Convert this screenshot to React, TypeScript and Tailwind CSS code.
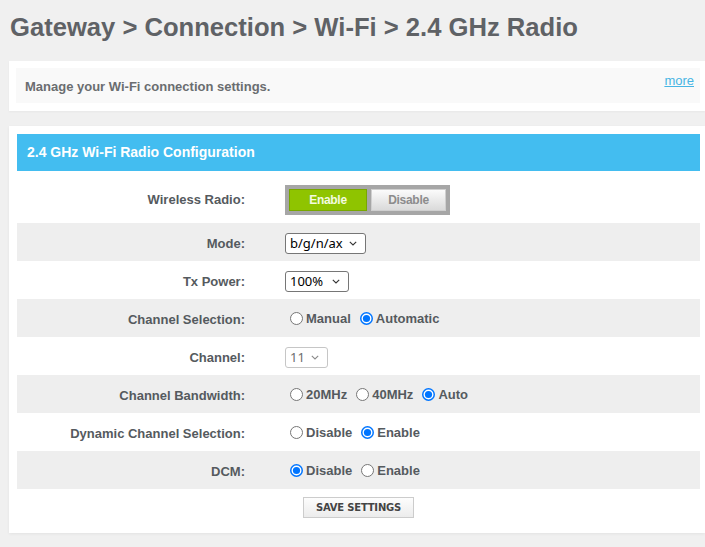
import React from "react";

const Radio = ({ checked }: { checked?: boolean }) => (
  <svg width="13" height="13" viewBox="0 0 13 13" className="ml-[5px] mr-[3px] shrink-0">
    {checked ? (
      <>
        <circle cx="6.5" cy="6.5" r="5.75" fill="#fff" stroke="#0075ff" strokeWidth="1.5" />
        <circle cx="6.5" cy="6.5" r="3.6" fill="#0075ff" />
      </>
    ) : (
      <circle cx="6.5" cy="6.5" r="6" fill="#fff" stroke="#767676" strokeWidth="1" />
    )}
  </svg>
);

const RadioGroup = ({ options, selected }: { options: string[]; selected: number }) => (
  <div className="flex items-center">
    {options.map((o, i) => (
      <div key={o} className="flex items-center mr-[4px]">
        <Radio checked={i === selected} />
        <span className="pt-[2px] font-bold text-[13px] text-[#555a5e]">{o}</span>
      </div>
    ))}
  </div>
);

const Chevron = ({ color }: { color: string }) => (
  <svg width="8" height="5" viewBox="0 0 8 5" className="shrink-0">
    <path d="M0.8 0.8 L4 4 L7.2 0.8" fill="none" stroke={color} strokeWidth="1.1" />
  </svg>
);

const Select = ({ value, width, disabled }: { value: string; width: string; disabled?: boolean }) => (
  <div
    className={
      "flex items-center justify-between h-[21px] mt-[2px] rounded-[3px] border bg-white pl-[4px] pr-[8px] " +
      width +
      (disabled ? " border-[#c6c6c6] text-[#6d6d6d]" : " border-[#767676] text-black")
    }
    style={{ fontFamily: '"Noto Sans", sans-serif' }}
  >
    <span className="text-[13px] leading-none">{value}</span>
    <Chevron color={disabled ? "#8a8a8a" : "#333"} />
  </div>
);

const Row = ({
  label,
  gray,
  h = "h-[38px]",
  children,
}: {
  label: string;
  gray?: boolean;
  h?: string;
  children: React.ReactNode;
}) => (
  <div className={"flex items-center " + h + (gray ? " bg-[#eeeeee]" : " bg-white")}>
    <div className="w-[268px] pr-[40px] pt-[3px] text-right font-bold text-[13px] text-[#555a5e] shrink-0">{label}</div>
    <div className="flex items-center">{children}</div>
  </div>
);

export default function App() {
  return (
    <div
      className="w-[705px] min-h-[547px] overflow-hidden bg-[#f0f0f0]"
      style={{ fontFamily: '"Liberation Sans", Arial, sans-serif' }}
    >
      <h1 className="pt-[14px] pl-[10px] text-[25.6px] leading-[26px] font-bold text-[#5f6266]">
        Gateway &gt; Connection &gt; Wi-Fi &gt; 2.4 GHz Radio
      </h1>

      <div className="mt-[21px] ml-[9px] bg-white pt-[7px] pb-[8px] pl-[7px] pr-[5px] shadow-[0_1px_2px_rgba(0,0,0,0.04)]">
        <div className="flex justify-between h-[35px] bg-[#f9f9f9] pl-[9px] pr-[6px]">
          <span className="self-center pt-[2px] font-bold text-[13px] text-[#6a6d70]">
            Manage your Wi-Fi connection settings.
          </span>
          <a className="pt-[5px] text-[13px] text-[#47b5e4] underline leading-[15px]">more</a>
        </div>
      </div>

      <div className="mt-[15px] ml-[9px] bg-white pt-[8px] pl-[8px] pr-[5px] pb-[15px] shadow-[0_1px_3px_rgba(0,0,0,0.06)]">
        <div className="h-[37px] bg-[#43bdf0] flex items-center pl-[10px]">
          <span className="text-white font-bold text-[14px]">2.4 GHz Wi-Fi Radio Configuration</span>
        </div>

        <Row label="Wireless Radio:" h="h-[52px] pt-[3px]">
          <div className="flex items-center gap-[4px] bg-[#a6a6a6] h-[30px] px-[4px] mt-[2px]">
            <div className="w-[78px] h-[22px] flex items-center justify-center bg-[#8fc400] border border-[#78a800] text-[#f4fbe0] font-bold text-[12px] tracking-[-0.3px]">
              Enable
            </div>
            <div className="w-[75px] h-[22px] flex items-center justify-center bg-gradient-to-b from-[#fbfbfb] to-[#dadada] border border-[#cfcfcf] text-[#8c8c8c] font-bold text-[12px] tracking-[-0.3px]">
              Disable
            </div>
          </div>
        </Row>
        <Row label="Mode:" gray>
          <Select value="b/g/n/ax" width="w-[81px]" />
        </Row>
        <Row label="Tx Power:">
          <Select value="100%" width="w-[64px]" />
        </Row>
        <Row label="Channel Selection:" gray>
          <RadioGroup options={["Manual", "Automatic"]} selected={1} />
        </Row>
        <Row label="Channel:">
          <Select value="11" width="w-[43px]" disabled />
        </Row>
        <Row label="Channel Bandwidth:" gray>
          <RadioGroup options={["20MHz", "40MHz", "Auto"]} selected={2} />
        </Row>
        <Row label="Dynamic Channel Selection:">
          <RadioGroup options={["Disable", "Enable"]} selected={1} />
        </Row>
        <Row label="DCM:" gray>
          <RadioGroup options={["Disable", "Enable"]} selected={0} />
        </Row>

        <div className="flex justify-center pt-[8px]">
          <button
            className="w-[111px] h-[21px] border border-[#cccccc] bg-gradient-to-b from-[#fdfdfd] to-[#ececec] text-[#444] font-bold text-[10px] tracking-[-0.2px]"
            style={{ fontFamily: '"DejaVu Sans", Verdana, sans-serif' }}
          >
            SAVE SETTINGS
          </button>
        </div>
      </div>
    </div>
  );
}
